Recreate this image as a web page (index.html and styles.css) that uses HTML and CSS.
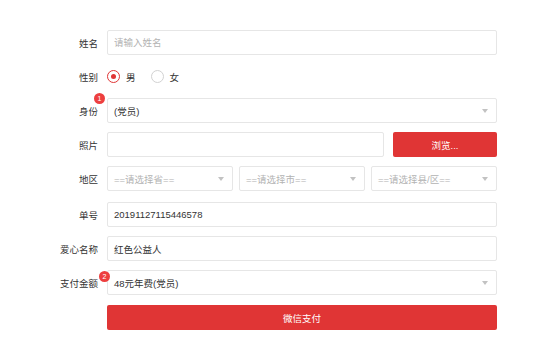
FILE: index.html
```html
<!DOCTYPE html>
<html lang="zh-CN">
<head>
    <meta charset="UTF-8">
    <meta name="viewport" content="width=device-width, initial-scale=1.0">
    <title>微信支付</title>
    <link rel="stylesheet" href="styles.css">
</head>
<body>
    <form class="pay-form">
        <div class="row">
            <label class="label">姓名</label>
            <div class="field">
                <input class="input" type="text" placeholder="请输入姓名">
            </div>
        </div>

        <div class="row">
            <label class="label">性别</label>
            <div class="field radios">
                <span class="radio checked"><i></i>男</span>
                <span class="radio"><i></i>女</span>
            </div>
        </div>

        <div class="row">
            <label class="label">身份<span class="badge badge-one">1</span></label>
            <div class="field">
                <div class="select">(党员)<span class="arrow"></span></div>
            </div>
        </div>

        <div class="row">
            <label class="label">照片</label>
            <div class="field split">
                <div class="input photo"></div>
                <button type="button" class="btn browse">浏览...</button>
            </div>
        </div>

        <div class="row row-wide">
            <label class="label">地区</label>
            <div class="field areas">
                <div class="select muted">==请选择省==<span class="arrow"></span></div>
                <div class="select muted">==请选择市==<span class="arrow"></span></div>
                <div class="select muted">==请选择县/区==<span class="arrow"></span></div>
            </div>
        </div>

        <div class="row">
            <label class="label">单号</label>
            <div class="field">
                <div class="input">20191127115446578</div>
            </div>
        </div>

        <div class="row">
            <label class="label">爱心名称</label>
            <div class="field">
                <div class="input">红色公益人</div>
            </div>
        </div>

        <div class="row row-mid">
            <label class="label">支付金额<span class="badge badge-two">2</span></label>
            <div class="field">
                <div class="select">48元年费(党员)<span class="arrow"></span></div>
            </div>
        </div>

        <div class="row">
            <span class="label"></span>
            <div class="field">
                <button type="button" class="btn pay">微信支付</button>
            </div>
        </div>
    </form>
</body>
</html>
```

FILE: styles.css
```css
body {
    margin: 0;
    background: #ffffff;
    color: #333;
    font-family: "Liberation Sans", "Noto Sans CJK SC", sans-serif;
    font-size: 9.5px;
}
.pay-form {
    padding-top: 30px;
}
.row {
    display: flex;
    align-items: center;
    height: 25px;
    margin-bottom: 9px;
}
.row-wide {
    margin-bottom: 11px;
}
.row-mid {
    margin-bottom: 10px;
}
.label {
    position: relative;
    width: 98px;
    box-sizing: border-box;
    text-align: right;
    color: #333;
}
.field {
    margin-left: 9px;
    width: 390px;
    height: 25px;
}
.input,
.select {
    position: relative;
    display: flex;
    align-items: center;
    box-sizing: border-box;
    width: 100%;
    height: 25px;
    padding: 0 6px;
    border: 1px solid #e6e6e6;
    border-radius: 2px;
    background: #fff;
    color: #333;
    font: inherit;
    outline: none;
}
.input::placeholder {
    color: #b3b3b3;
}
.muted {
    color: #b3b3b3;
}
.arrow {
    position: absolute;
    right: 8px;
    top: 10px;
    border-left: 3.5px solid transparent;
    border-right: 3.5px solid transparent;
    border-top: 4px solid #c2c2c2;
}
.radios {
    display: flex;
    align-items: center;
}
.radio {
    display: flex;
    align-items: center;
    margin-right: 15px;
}
.radio i {
    box-sizing: border-box;
    width: 13px;
    height: 13px;
    border: 1px solid #d2d2d2;
    border-radius: 50%;
    margin-right: 6px;
    display: flex;
    align-items: center;
    justify-content: center;
}
.radio.checked i {
    border-color: #e03535;
}
.radio.checked i::after {
    content: "";
    width: 5px;
    height: 5px;
    border-radius: 50%;
    background: #e03535;
}
.split {
    display: flex;
    gap: 9px;
}
.photo {
    flex: 1;
}
.areas {
    display: flex;
    gap: 6px;
}
.areas .select {
    flex: 1;
}
.btn {
    box-sizing: border-box;
    height: 25px;
    border: none;
    border-radius: 2px;
    background: #e03535;
    color: #fff;
    font: inherit;
    padding: 0;
}
.browse {
    width: 104px;
}
.pay {
    width: 100%;
}
.badge {
    position: absolute;
    z-index: 2;
    width: 11px;
    height: 11px;
    border-radius: 50%;
    background: #ed3f3f;
    color: #fff;
    font-size: 7px;
    line-height: 11px;
    text-align: center;
}
.badge-one {
    right: -7px;
    top: -11px;
}
.badge-two {
    right: -12px;
    top: -5px;
}
```
